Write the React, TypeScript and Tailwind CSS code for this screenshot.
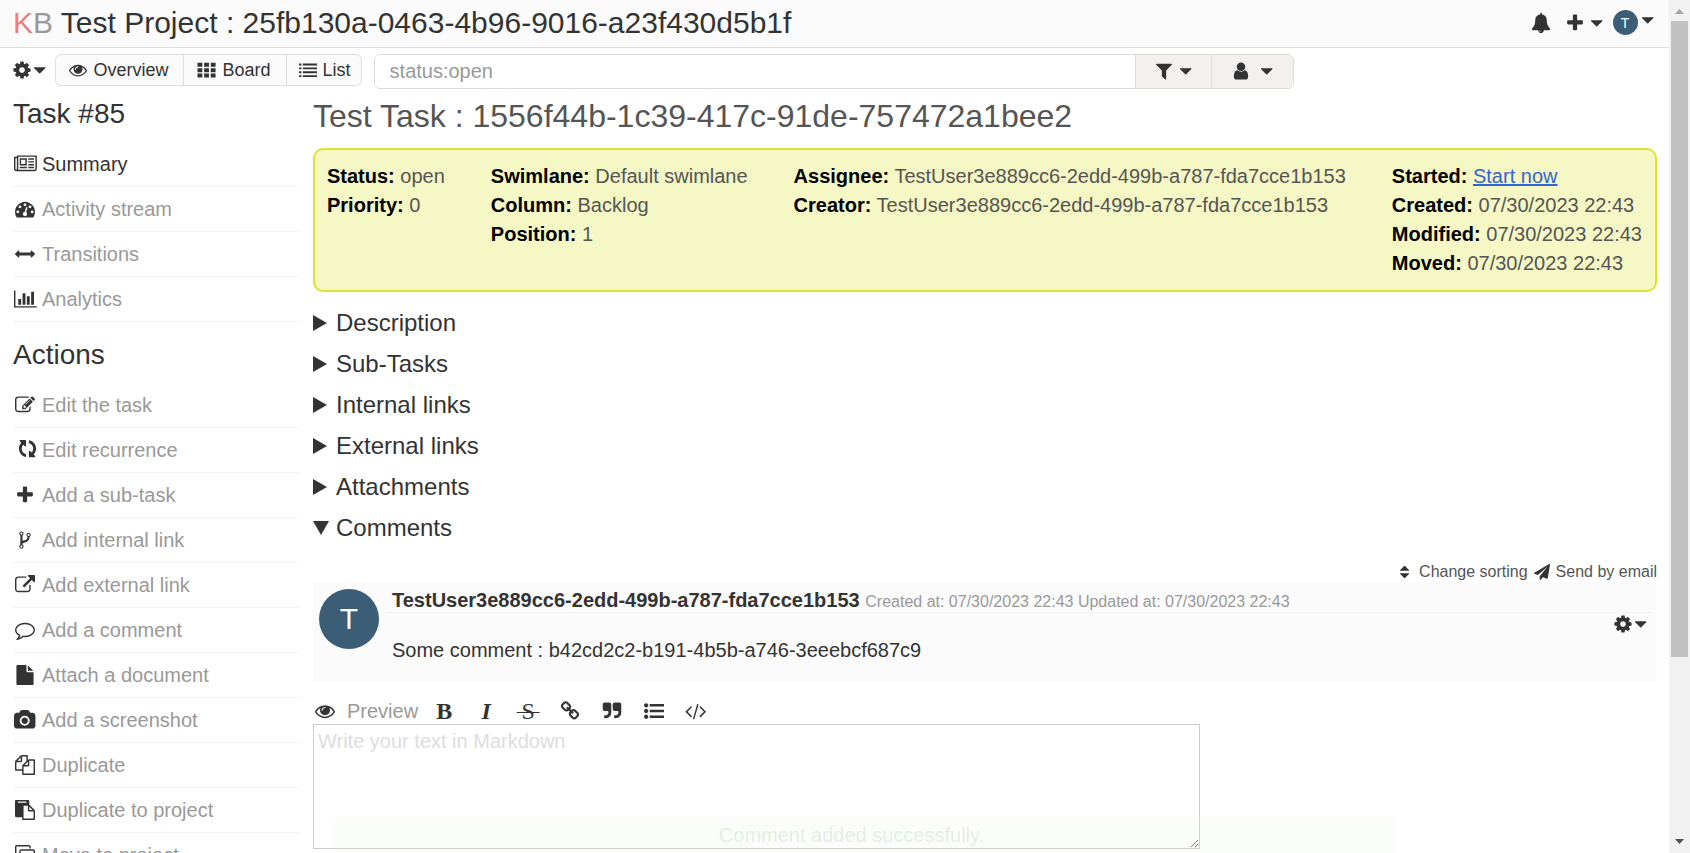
import React from "react";

type Shape = { w?: number; d: string; transform?: string };

const quote =
  "v704q0 104-40.5 198.5t-109.5 163.5-163.5 109.5-198.5 40.5h-64q-26 0-45-19t-19-45v-128q0-26 19-45t45-19h64q106 0 181-75t75-181v-32q0-40-28-68t-68-28h-224q-80 0-136-56t-56-136v-384q0-80 56-136t136-56h384q80 0 136 56t56 136z";

const shapes = {
  cog: {
    d: "M1152 896q0-106-75-181t-181-75-181 75-75 181 75 181 181 75 181-75 75-181zm512-109v222q0 12-8 23t-20 13l-185 28q-19 54-39 91 35 50 107 138 10 12 10 25t-9 23q-27 37-99 108t-94 71q-12 0-26-9l-138-108q-44 23-91 38-16 136-29 186-7 28-36 28h-222q-14 0-24.5-8.5t-11.5-21.5l-28-184q-49-16-90-37l-141 107q-10 9-25 9-14 0-25-11-126-114-165-168-7-10-7-23 0-12 8-23 15-21 51-66.5t54-70.5q-27-50-41-99l-183-27q-13-2-21-12.5t-8-23.5v-222q0-12 8-23t19-13l186-28q14-46 39-92-40-57-107-138-10-12-10-24 0-10 9-23 26-36 98.5-107.5t94.5-71.5q13 0 26 10l138 107q44-23 91-38 16-136 29-186 7-28 36-28h222q14 0 24.5 8.5t11.5 21.5l28 184q49 16 90 37l142-107q9-9 24-9 13 0 25 10 129 119 165 170 7 8 7 22 0 12-8 23-15 21-51 66.5t-54 70.5q26 50 41 98l183 28q13 2 21 12.5t8 23.5z",
  },
  caret: {
    w: 1024,
    d: "M1024 704q0 26-19 45l-448 448q-19 19-45 19t-45-19l-448-448q-19-19-19-45t19-45 45-19h896q26 0 45 19t19 45z",
  },
  eye: {
    d: "M1664 960q-152-236-381-353 61 104 61 225 0 185-131.5 316.5t-316.5 131.5-316.5-131.5-131.5-316.5q0-121 61-225-229 117-381 353 133 205 333.5 326.5t434.5 121.5 434.5-121.5 333.5-326.5zm-720-384q0-20-14-34t-34-14q-125 0-214.5 89.5t-89.5 214.5q0 20 14 34t34 14 34-14 14-34q0-86 61-147t147-61q20 0 34-14t14-34zm848 384q0 34-20 69-140 230-376.5 368.5t-499.5 138.5-499.5-139-376.5-368q-20-35-20-69t20-69q140-229 376.5-368t499.5-139 499.5 139 376.5 368q20 35 20 69z",
  },
  th: {
    w: 1900,
    d: "M50 170h480v400h-480zM710 170h480v400h-480zM1370 170h480v400h-480zM50 710h480v400h-480zM710 710h480v400h-480zM1370 710h480v400h-480zM50 1250h480v400h-480zM710 1250h480v400h-480zM1370 1250h480v400h-480z",
  },
  list: {
    d: "M0 256h240v190h-240zM384 256h1408v190h-1408zM0 640h240v190h-240zM384 640h1408v190h-1408zM0 1024h240v190h-240zM384 1024h1408v190h-1408zM0 1408h240v190h-240zM384 1408h1408v190h-1408z",
  },
  listUl: {
    d: "M384 1408q0 80-56 136t-136 56-136-56-56-136 56-136 136-56 136 56 56 136zm0-512q0 80-56 136t-136 56-136-56-56-136 56-136 136-56 136 56 56 136zm0-512q0 80-56 136t-136 56-136-56-56-136 56-136 136-56 136 56 56 136zM512 270h1280v228h-1280zM512 782h1280v228h-1280zM512 1294h1280v228h-1280z",
  },
  bell: {
    d: "M912 1696q0-16-16-16-59 0-101.5-42.5t-42.5-101.5q0-16-16-16t-16 16q0 73 51.5 124.5t124.5 51.5q16 0 16-16zm816-288q0 52-38 90t-90 38h-448q0 106-75 181t-181 75-181-75-75-181h-448q-52 0-90-38t-38-90q50-42 91-88t85-119.5 74.5-158.5 50-206 19.5-260q0-152 117-282.5t307-158.5q-8-19-8-39 0-40 28-68t68-28 68 28 28 68q0 20-8 39 190 28 307 158.5t117 282.5q0 139 19.5 260t50 206 74.5 158.5 85 119.5 91 88z",
  },
  plus: {
    d: "M1600 736v192q0 40-28 68t-68 28h-416v416q0 40-28 68t-68 28h-192q-40 0-68-28t-28-68v-416h-416q-40 0-68-28t-28-68v-192q0-40 28-68t68-28h416v-416q0-40 28-68t68-28h192q40 0 68 28t28 68v416h416q40 0 68 28t28 68z",
  },
  filter: {
    d: "M1595 295q17 41-14 70l-493 493v742q0 42-39 59-13 5-25 5-27 0-45-19l-256-256q-19-19-19-45v-486l-493-493q-31-29-14-70 17-39 59-39h1280q42 0 59 39z",
  },
  user: {
    d: "M1536 1399q0 109-62.5 187t-150.5 78h-854q-88 0-150.5-78t-62.5-187q0-85 8.5-160.5t31.5-152 58.5-131 94-89 134.5-34.5q131 128 313 128t313-128q76 0 134.5 34.5t94 89 58.5 131 31.5 152 8.5 160.5zm-256-887q0 159-112.5 271.5t-271.5 112.5-271.5-112.5-112.5-271.5 112.5-271.5 271.5-112.5 271.5 112.5 112.5 271.5z",
  },
  newspaper: {
    w: 2048,
    d: "M1024 512h-384v384h384v-384zm128 640v128h-640v-128h640zm0-768v640h-640v-640h640zm640 768v128h-512v-128h512zm0-256v128h-512v-128h512zm0-256v128h-512v-128h512zm0-256v128h-512v-128h512zm-1536 960v-960h-128v960q0 26 19 45t45 19 45-19 19-45zm1664 0v-1088h-1536v1088q0 33-11 64h1483q26 0 45-19t19-45zm128-1216v1216q0 80-56 136t-136 56h-1664q-80 0-136-56t-56-136v-1088h256v-128h1792z",
  },
  dashboard: {
    d: "M384 1152q0-53-37.5-90.5t-90.5-37.5-90.5 37.5-37.5 90.5 37.5 90.5 90.5 37.5 90.5-37.5 37.5-90.5zm192-448q0-53-37.5-90.5t-90.5-37.5-90.5 37.5-37.5 90.5 37.5 90.5 90.5 37.5 90.5-37.5 37.5-90.5zm428 481l101-382q6-26-7.5-48.5t-38.5-29.5-48 6.5-30 39.5l-101 382q-60 5-107 43.5t-63 98.5q-20 77 20 146t117 89 146-20 89-117q16-60-6-117t-72-91zm660-33q0-53-37.5-90.5t-90.5-37.5-90.5 37.5-37.5 90.5 37.5 90.5 90.5 37.5 90.5-37.5 37.5-90.5zm-640-640q0-53-37.5-90.5t-90.5-37.5-90.5 37.5-37.5 90.5 37.5 90.5 90.5 37.5 90.5-37.5 37.5-90.5zm448 192q0-53-37.5-90.5t-90.5-37.5-90.5 37.5-37.5 90.5 37.5 90.5 90.5 37.5 90.5-37.5 37.5-90.5zm320 448q0 261-141 483-19 29-54 29h-1402q-35 0-54-29-141-221-141-483 0-182 71-348t191-286 286-191 348-71 348 71 286 191 191 286 71 348z",
  },
  arrows: {
    d: "M1792 896q0 26-19 45l-256 256q-19 19-45 19t-45-19-19-45v-128h-1024v128q0 26-19 45t-45 19-45-19l-256-256q-19-19-19-45t19-45l256-256q19-19 45-19t45 19 19 45v128h1024v-128q0-26 19-45t45-19 45 19l256 256q19 19 19 45z",
  },
  chart: {
    w: 2048,
    d: "M640 896v512h-256v-512h256zm384-512v1024h-256v-1024h256zm1024 1152v128h-2048v-1536h128v1408h1920zm-640-896v768h-256v-768h256zm384-384v1152h-256v-1152h256z",
  },
  edit: {
    d: "M888 1184l116-116-152-152-116 116v56h96v96h56zm440-720q-16-16-33 1l-350 350q-17 17-1 33t33-1l350-350q17-17 1-33zm80 594v190q0 119-84.5 203.5t-203.5 84.5h-832q-119 0-203.5-84.5t-84.5-203.5v-832q0-119 84.5-203.5t203.5-84.5h832q63 0 117 25 15 7 18 23 3 17-9 29l-49 49q-14 14-32 8-23-6-45-6h-832q-66 0-113 47t-47 113v832q0 66 47 113t113 47h832q66 0 113-47t47-113v-126q0-13 9-22l64-64q15-15 35-7t20 29zm-96-738l288 288-672 672h-288v-288zm444 132l-92 92-288-288 92-92q28-28 68-28t68 28l152 152q28 28 28 68t-28 68z",
  },
  refresh: {
    transform: "translate(220 -120) rotate(90 896 896)",
    d: "M1639 1056q0 5-1 7-64 268-268 434.5t-478 166.5q-146 0-282.5-55t-243.5-157l-129 129q-19 19-45 19t-45-19-19-45v-448q0-26 19-45t45-19h448q26 0 45 19t19 45-19 45l-137 137q71 66 161 102t187 36q134 0 250-65t186-179q11-17 53-117 8-23 30-23h192q13 0 22.5 9.5t9.5 22.5zm25-800v448q0 26-19 45t-45 19h-448q-26 0-45-19t-19-45 19-45l138-138q-148-137-349-137-134 0-250 65t-186 179q-11 17-53 117-8 23-30 23h-199q-13 0-22.5-9.5t-9.5-22.5v-7q65-268 270-434.5t480-166.5q146 0 284 55.5t245 156.5l130-129q19-19 45-19t45 19 19 45z",
  },
  fork: {
    d: "M672 1472q0-40-28-68t-68-28-68 28-28 68 28 68 68 28 68-28 28-68zm0-1152q0-40-28-68t-68-28-68 28-28 68 28 68 68 28 68-28 28-68zm640 128q0-40-28-68t-68-28-68 28-28 68 28 68 68 28 68-28 28-68zm96 0q0 52-26 96.5t-70 69.5q-2 287-226 414-67 38-203 81-128 40-169.5 71t-41.5 100v26q44 25 70 69.5t26 96.5q0 80-56 136t-136 56-136-56-56-136q0-52 26-96.5t70-69.5v-820q-44-25-70-69.5t-26-96.5q0-80 56-136t136-56 136 56 56 136q0 52-26 96.5t-70 69.5v497q54-26 154-57 55-17 87.5-29.5t70.5-31 59-39.5 40.5-51 28-69.5 8.5-91.5q-44-25-70-69.5t-26-96.5q0-80 56-136t136-56 136 56 56 136z",
  },
  external: {
    d: "M1408 928v320q0 119-84.5 203.5t-203.5 84.5h-832q-119 0-203.5-84.5t-84.5-203.5v-832q0-119 84.5-203.5t203.5-84.5h704q14 0 23 9t9 23v64q0 14-9 23t-23 9h-704q-66 0-113 47t-47 113v832q0 66 47 113t113 47h832q66 0 113-47t47-113v-320q0-14 9-23t23-9h64q14 0 23 9t9 23zm384-864v512q0 26-19 45t-45 19-45-19l-176-176-652 652q-10 10-23 10t-23-10l-114-114q-10-10-10-23t10-23l652-652-176-176q-19-19-19-45t19-45 45-19h512q26 0 45 19t19 45z",
  },
  comment: {
    d: "M896 384q-204 0-381.5 69.5t-282 187.5-104.5 255q0 112 71.5 213.5t201.5 175.5l87 50-27 96q-24 91-70 172 152-63 275-171l43-38 57 6q69 8 130 8 204 0 381.5-69.5t282-187.5 104.5-255-104.5-255-282-187.5-381.5-69.5zm896 512q0 174-120 321.5t-326 233-450 85.5q-70 0-145-8-198 175-460 242-49 14-114 22h-5q-15 0-27-10.5t-16-27.5v-1q-3-4-.5-12t2-10 4.5-9.5l6-9 7-8.5 8-9q7-8 31-34.5t34.5-38 31-39.5 32.5-51 27-59 26-76q-157-89-247.5-220t-90.5-281q0-174 120-321.5t326-233 450-85.5 450 85.5 326 233 120 321.5z",
  },
  file: {
    d: "M1152 512v-472q22 14 36 28l408 408q14 14 28 36h-472zm-128 32q0 40 28 68t68 28h544v1056q0 40-28 68t-68 28h-1344q-40 0-68-28t-28-68v-1600q0-40 28-68t68-28h800v544z",
  },
  camera: {
    w: 1920,
    d: "M960 672q119 0 203.5 84.5t84.5 203.5-84.5 203.5-203.5 84.5-203.5-84.5-84.5-203.5 84.5-203.5 203.5-84.5zm704-416q106 0 181 75t75 181v896q0 106-75 181t-181 75h-1408q-106 0-181-75t-75-181v-896q0-106 75-181t181-75h224l51-136q19-49 69.5-84.5t103.5-35.5h512q53 0 103.5 35.5t69.5 84.5l51 136h224zm-704 1152q185 0 316.5-131.5t131.5-316.5-131.5-316.5-316.5-131.5-316.5 131.5-131.5 316.5 131.5 316.5 316.5 131.5z",
  },
  files: {
    d: "M1696 384q40 0 68 28t28 68v1216q0 40-28 68t-68 28h-960q-40 0-68-28t-28-68v-288h-544q-40 0-68-28t-28-68v-672q0-40 20-88t48-76l408-408q28-28 76-48t88-20h416q40 0 68 28t28 68v328q68-40 128-40h416zm-544 213l-299 299h299v-299zm-640-384l-299 299h299v-299zm196 647l316-316v-416h-384v416q0 40-28 68t-68 28h-416v640h512v-256q0-40 20-88t48-76zm956 804v-1152h-384v416q0 40-28 68t-68 28h-416v640h896z",
  },
  paste: {
    d: "M768 1664h896v-640h-416q-40 0-68-28t-28-68v-416h-384v1152zm256-1440v-64q0-13-9.5-22.5t-22.5-9.5h-704q-13 0-22.5 9.5t-9.5 22.5v64q0 13 9.5 22.5t22.5 9.5h704q13 0 22.5-9.5t9.5-22.5zm256 672h299l-299-299v299zm512 128v672q0 40-28 68t-68 28h-960q-40 0-68-28t-28-68v-160h-544q-40 0-68-28t-28-68v-1344q0-40 28-68t68-28h1088q40 0 68 28t28 68v328q21 13 36 28l408 408q28 28 48 76t20 88z",
  },
  clone: {
    d: "M1664 1632v-1088q0-13-9.5-22.5t-22.5-9.5h-1088q-13 0-22.5 9.5t-9.5 22.5v1088q0 13 9.5 22.5t22.5 9.5h1088q13 0 22.5-9.5t9.5-22.5zm128-1088v1088q0 66-47 113t-113 47h-1088q-66 0-113-47t-47-113v-1088q0-66 47-113t113-47h1088q66 0 113 47t47 113zm-384-384v160h-128v-160q0-13-9.5-22.5t-22.5-9.5h-1088q-13 0-22.5 9.5t-9.5 22.5v1088q0 13 9.5 22.5t22.5 9.5h160v128h-160q-66 0-113-47t-47-113v-1088q0-66 47-113t113-47h1088q66 0 113 47t47 113z",
  },
  sort: {
    w: 1024,
    d: "M1024 1088q0 26-19 45l-448 448q-19 19-45 19t-45-19l-448-448q-19-19-19-45t19-45 45-19h896q26 0 45 19t19 45zm0-384q0 26-19 45t-45 19h-896q-26 0-45-19t-19-45 19-45l448-448q19-19 45-19t45 19l448 448q19 19 19 45z",
  },
  plane: {
    d: "M1764 11q33 24 27 64l-256 1536q-5 29-32 45-14 8-31 8-11 0-24-5l-453-185-242 295q-18 23-49 23-13 0-22-4-19-7-30.5-23.5t-11.5-36.5v-349l864-1059-1069 925-395-162q-37-14-40-55-2-40 32-59l1664-960q15-9 32-9 20 0 36 11z",
  },
  link: {
    d: "M1520 1216q0-40-28-68l-208-208q-28-28-68-28-42 0-72 32 3 3 19 18.5t21.5 21.5 15 19 13 25.5 3.5 27.5q0 40-28 68t-68 28q-15 0-27.5-3.5t-25.5-13-19-15-21.5-21.5-18.5-19q-33 31-33 73 0 40 28 68l206 207q27 27 68 27 40 0 68-26l147-146q28-28 28-67zm-703-705q0-40-28-68l-206-207q-28-28-68-28-39 0-68 27l-147 146q-28 28-28 67 0 40 28 68l208 208q27 27 68 27 42 0 72-31-3-3-19-18.5t-21.5-21.5-15-19-13-25.5-3.5-27.5q0-40 28-68t68-28q15 0 27.5 3.5t25.5 13 19 15 21.5 21.5 18.5 19q33-31 33-73zm895 705q0 120-85 203l-147 146q-83 83-203 83-121 0-204-85l-206-207q-83-83-83-203 0-123 88-209l-88-88q-86 88-208 88-120 0-204-84l-208-208q-84-84-84-204t85-203l147-146q83-83 203-83 121 0 204 85l206 207q83 83 83 203 0 123-88 209l88 88q86-88 208-88 120 0 204 84l208 208q84 84 84 204z",
  },
  quote: { d: "M832 320" + quote + "M1728 320" + quote },
  code: {
    w: 1920,
    d: "M617 1399l-50 50q-10 10-23 10t-23-10l-466-466q-10-10-10-23t10-23l466-466q10-10 23-10t23 10l50 50q10 10 10 23t-10 23l-393 393 393 393q10 10 10 23t-10 23zm591-1067l-373 1291q-4 13-15.5 19.5t-23.5 2.5l-62-17q-13-4-19.5-15.5t-2.5-24.5l373-1291q4-13 15.5-19.5t23.5-2.5l62 17q13 4 19.5 15.5t2.5 24.5zm657 651l-466 466q-10 10-23 10t-23-10l-50-50q-10-10-10-23t10-23l393-393-393-393q-10-10-10-23t10-23l50-50q10-10 23-10t23 10l466 466q10 10 10 23t-10 23z",
  },
} satisfies Record<string, Shape>;

type IconName = keyof typeof shapes;

function Icon({ name, className = "h-5" }: { name: IconName; className?: string }) {
  const s: Shape = shapes[name];
  return (
    <svg
      aria-hidden="true"
      viewBox={`0 0 ${s.w ?? 1792} 1792`}
      className={`${className} w-auto shrink-0 overflow-visible fill-[#333]`}
    >
      <path d={s.d} transform={s.transform} />
    </svg>
  );
}

const views: { icon: IconName; label: string }[] = [
  { icon: "eye", label: "Overview" },
  { icon: "th", label: "Board" },
  { icon: "list", label: "List" },
];

const taskLinks: { icon: IconName; label: string; active?: boolean }[] = [
  { icon: "newspaper", label: "Summary", active: true },
  { icon: "dashboard", label: "Activity stream" },
  { icon: "arrows", label: "Transitions" },
  { icon: "chart", label: "Analytics" },
];

const actionLinks: { icon: IconName; label: string; active?: boolean }[] = [
  { icon: "edit", label: "Edit the task" },
  { icon: "refresh", label: "Edit recurrence" },
  { icon: "plus", label: "Add a sub-task" },
  { icon: "fork", label: "Add internal link" },
  { icon: "external", label: "Add external link" },
  { icon: "comment", label: "Add a comment" },
  { icon: "file", label: "Attach a document" },
  { icon: "camera", label: "Add a screenshot" },
  { icon: "files", label: "Duplicate" },
  { icon: "paste", label: "Duplicate to project" },
  { icon: "clone", label: "Move to project" },
];

function SideList({ items }: { items: typeof taskLinks }) {
  return (
    <ul>
      {items.map((item) => (
        <li key={item.label} className="border-b border-dotted border-[#e6e6e6] py-2.5 leading-6">
          <a href="#" className={`flex items-center gap-[5px] ${item.active ? "text-[#333]" : "text-[#999]"}`}>
            <span className="flex w-6 shrink-0 justify-center">
              <Icon name={item.icon} />
            </span>
            {item.label}
          </a>
        </li>
      ))}
    </ul>
  );
}

function Field({ label, children }: { label: string; children: React.ReactNode }) {
  return (
    <li>
      <strong className="text-black">{label}</strong> {children}
    </li>
  );
}

function Section({ title, open, children }: { title: string; open?: boolean; children?: React.ReactNode }) {
  return (
    <details open={open} className="group">
      <summary className="flex h-[41px] cursor-pointer list-none items-center text-2xl">
        <svg aria-hidden="true" viewBox="0 0 23 16" className="h-4 w-[23px] fill-[#333] group-open:hidden">
          <path d="M0 0L14 8L0 16Z" />
        </svg>
        <svg aria-hidden="true" viewBox="0 0 23 16" className="hidden h-4 w-[23px] fill-[#333] group-open:block">
          <path d="M0 1H16L8 15Z" />
        </svg>
        {title}
      </summary>
      {children}
    </details>
  );
}

const tools: { label: string; content: React.ReactNode }[] = [
  { label: "Bold", content: <b className="font-['Liberation_Serif',serif] text-2xl leading-none">B</b> },
  { label: "Italic", content: <b className="font-['Liberation_Serif',serif] text-2xl leading-none italic">I</b> },
  {
    label: "Strikethrough",
    content: (
      <span className="font-['Liberation_Serif',serif] text-2xl leading-none line-through decoration-1">
        {"\u2009S\u2009"}
      </span>
    ),
  },
  { label: "Link", content: <Icon name="link" /> },
  { label: "Quote", content: <Icon name="quote" /> },
  { label: "Unordered list", content: <Icon name="listUl" /> },
  { label: "Code", content: <Icon name="code" /> },
];

function Comment() {
  return (
    <article className="flex h-[100px] bg-[#fbfbfb] px-1.5 pt-[7px]">
      <div className="flex size-[60px] shrink-0 items-center justify-center rounded-full bg-[#3b5e76] text-3xl text-white">
        T
      </div>
      <div className="ml-[9px] flex-1">
        <div className="border-b border-dotted border-[#e6e6e6] pl-1 leading-[23px]">
          <strong>TestUser3e889cc6-2edd-499b-a787-fda7cce1b153</strong>{" "}
          <span className="text-base leading-none text-[#999]">
            Created at: 07/30/2023 22:43 Updated at: 07/30/2023 22:43
          </span>
        </div>
        <div className="flex justify-between pl-1">
          <p className="pt-[25px] leading-6">Some comment : b42cd2c2-b191-4b5b-a746-3eeebcf687c9</p>
          <button aria-label="Comment actions" className="flex h-[22px] items-center gap-0.5 pr-[5px]">
            <Icon name="cog" />
            <Icon name="caret" />
          </button>
        </div>
      </div>
    </article>
  );
}

export default function App() {
  return (
    <div className="flex h-screen overflow-hidden bg-white font-['Liberation_Sans',Arial,sans-serif] text-xl text-[#333]">
      <div className="relative min-w-0 flex-1 overflow-hidden">
        <header className="flex h-12 items-center justify-between border-b border-[#dedede] bg-[#fbfbfb] pr-4 pb-0.5 pl-[13px]">
          <h1 className="text-3xl">
            <a href="#" aria-label="Dashboard">
              <span className="text-[#e98080]">K</span>
              <span className="text-[#999]">B</span>
            </a>{" "}
            Test Project : 25fb130a-0463-4b96-9016-a23f430d5b1f
          </h1>
          <div className="flex items-center">
            <button aria-label="Notifications" className="mr-3.5">
              <Icon name="bell" />
            </button>
            <button aria-label="Create" className="mr-2.5 flex items-center gap-1.5">
              <Icon name="plus" />
              <Icon name="caret" />
            </button>
            <button aria-label="User menu" className="flex items-start gap-1">
              <span className="flex size-[25px] items-center justify-center rounded-full bg-[#3b5e76] text-sm text-white">
                T
              </span>
              <Icon name="caret" />
            </button>
          </div>
        </header>

        <nav className="flex items-start pt-1.5 pl-3">
          <button aria-label="Project menu" className="flex h-8 items-center gap-0.5">
            <Icon name="cog" />
            <Icon name="caret" />
          </button>
          <ul className="ml-2.5 flex h-8 overflow-hidden rounded-md border border-[#dedede] bg-[#fbfbfb] text-lg leading-none">
            {views.map((v) => (
              <li key={v.label} className="group/view flex border-r border-[#dedede] last:border-r-0">
                <a href="#" className="flex items-center gap-1.5 pr-[15px] pl-[13px] group-last/view:pr-2.5 group-last/view:pl-3">
                  <Icon name={v.icon} className="h-[18px]" />
                  {v.label}
                </a>
              </li>
            ))}
          </ul>
          <form className="ml-3 flex h-[35px] w-[920px] overflow-hidden rounded-md border border-[#dfdad5]">
            <input
              aria-label="Search"
              defaultValue="status:open"
              className="min-w-0 flex-1 bg-white pb-0.5 pl-[15px] text-[#999] outline-none"
            />
            <button
              type="button"
              aria-label="Default filters"
              className="flex w-[76px] items-center justify-center gap-1.5 border-l border-[#dfdad5] bg-[#f3f1f0] pb-0.5"
            >
              <Icon name="filter" />
              <Icon name="caret" />
            </button>
            <button
              type="button"
              aria-label="User filters"
              className="flex w-[82px] items-center justify-center gap-2.5 border-l border-[#dfdad5] bg-[#f3f1f0] pb-0.5"
            >
              <Icon name="user" />
              <Icon name="caret" />
            </button>
          </form>
        </nav>

        <div className="mt-[9px] flex items-start pr-3 pl-[13px]">
          <aside className="w-[287px] shrink-0">
            <h2 className="mb-3 text-[28px] leading-8">Task #85</h2>
            <SideList items={taskLinks} />
            <h2 className="mt-[17px] mb-3 text-[28px] leading-8">Actions</h2>
            <SideList items={actionLinks} />
          </aside>

          <main className="ml-[13px] min-w-0 flex-1">
            <h2 className="mb-3.5 text-[32px] leading-9 text-[#555]">
              Test Task : 1556f44b-1c39-417c-91de-757472a1bee2
            </h2>
            <section className="flex justify-between rounded-[10px] border-2 border-[#dfe32d] bg-[#f5f7c4] p-3 pr-[13px] leading-[29px] text-[#555]">
              <ul>
                <Field label="Status:">open</Field>
                <Field label="Priority:">0</Field>
              </ul>
              <ul>
                <Field label="Swimlane:">Default swimlane</Field>
                <Field label="Column:">Backlog</Field>
                <Field label="Position:">1</Field>
              </ul>
              <ul>
                <Field label="Assignee:">TestUser3e889cc6-2edd-499b-a787-fda7cce1b153</Field>
                <Field label="Creator:">TestUser3e889cc6-2edd-499b-a787-fda7cce1b153</Field>
              </ul>
              <ul>
                <Field label="Started:">
                  <a href="#" className="text-[#36c] underline">
                    Start now
                  </a>
                </Field>
                <Field label="Created:">07/30/2023 22:43</Field>
                <Field label="Modified:">07/30/2023 22:43</Field>
                <Field label="Moved:">07/30/2023 22:43</Field>
              </ul>
            </section>

            <div className="mt-2.5">
              <Section title="Description" />
              <Section title="Sub-Tasks" />
              <Section title="Internal links" />
              <Section title="External links" />
              <Section title="Attachments" />
              <Section title="Comments" open>
                <div className="mt-3.5 flex justify-end gap-1.5 text-base leading-5 text-[#555]">
                  <a href="#" className="flex items-center gap-2.5">
                    <Icon name="sort" className="h-4" />
                    Change sorting
                  </a>
                  <a href="#" className="flex items-center gap-1.5">
                    <Icon name="plane" className="h-4" />
                    Send by email
                  </a>
                </div>
                <Comment />
                <form className="mt-[15px] w-[66%]">
                  <div className="flex h-[27px] items-center pl-0.5">
                    <button type="button" className="mr-[5px] flex items-center gap-3 text-[#999]">
                      <Icon name="eye" />
                      Preview
                    </button>
                    {tools.map((t) => (
                      <button
                        type="button"
                        key={t.label}
                        aria-label={t.label}
                        className="flex w-[42px] items-center justify-center"
                      >
                        {t.content}
                      </button>
                    ))}
                  </div>
                  <textarea
                    aria-label="Comment"
                    placeholder="Write your text in Markdown"
                    className="block h-[125px] w-full resize border border-[#ccc] px-1 py-1 leading-6 outline-none placeholder:text-[#ddd]"
                  />
                </form>
              </Section>
            </div>
          </main>
        </div>

        <div
          role="status"
          className="absolute bottom-0 left-[20%] box-content h-9 w-[60%] rounded-t-md bg-[#dff0d8]/15 pr-[44px] pl-[17px] text-center leading-9 text-[#468847]/15"
        >
          Comment added successfully.
        </div>
      </div>

      <div aria-hidden="true" className="flex w-[21px] shrink-0 flex-col items-center bg-[#f1f1f1]">
        <svg viewBox="0 0 21 21" className="size-[21px] shrink-0 fill-[#a3a3a3]">
          <path d="M6 14L10.500 9L15 14Z" />
        </svg>
        <div className="h-[636px] w-[17px] bg-[#c1c1c1]" />
        <svg viewBox="0 0 21 21" className="mt-auto size-[21px] shrink-0 fill-[#505050]">
          <path d="M6 7L10.500 12L15 7Z" />
        </svg>
      </div>
    </div>
  );
}
